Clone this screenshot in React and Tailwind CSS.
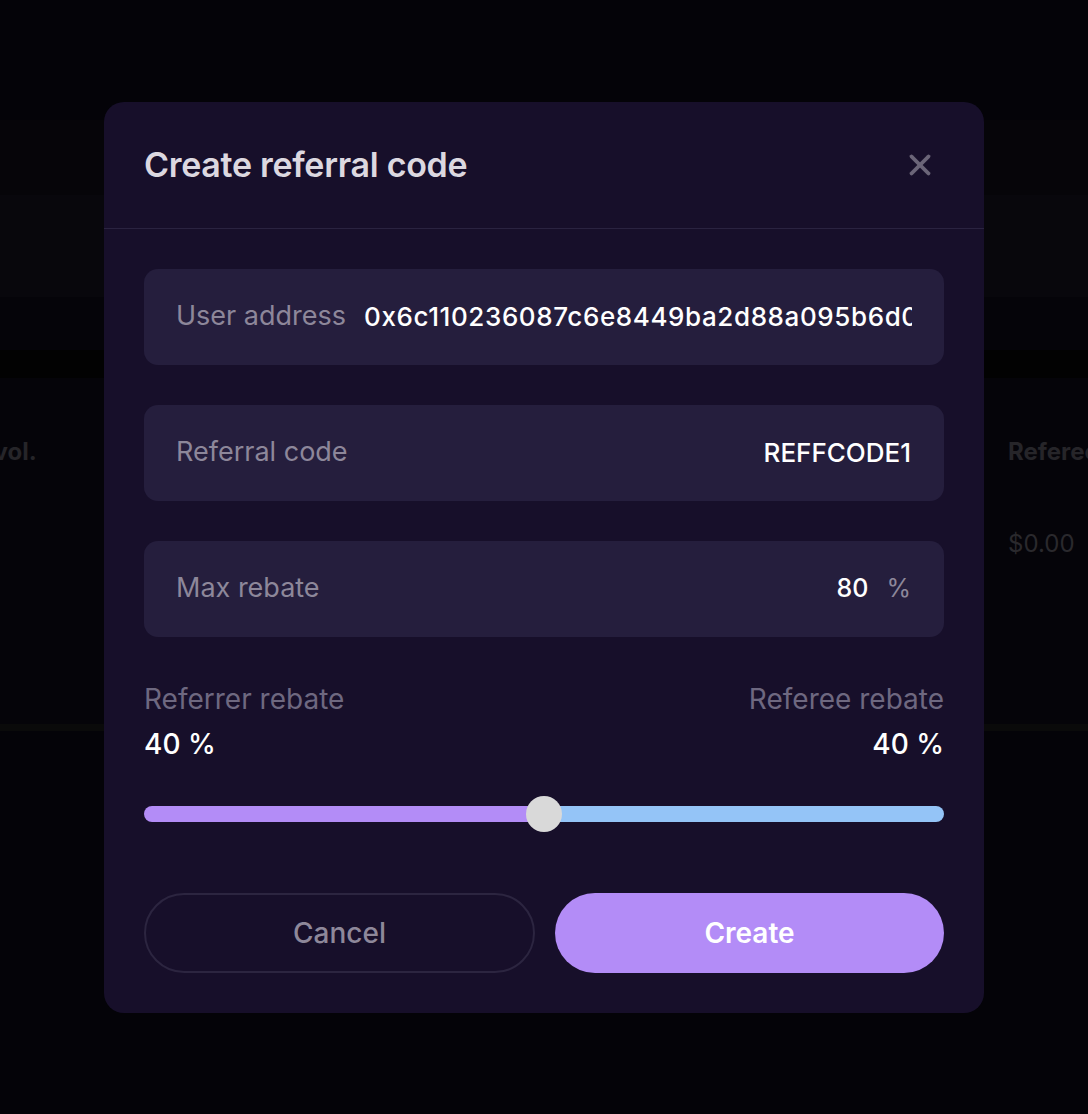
import React, { useState } from "react";
import { X } from "lucide-react";

const Field = ({ label, children }) => (
    <div className="flex items-center h-24 rounded-[14px] bg-[#251e3d] px-8">
        <span className="shrink-0 text-[27px] text-[#8d879a]">{label}</span>
        {children}
    </div>
);

const App = () => {
    const [split, setSplit] = useState(50);
    const [maxRebate] = useState(80);
    const referrer = Math.round((maxRebate * split) / 100);
    const referee = maxRebate - referrer;

    return (
        <div className="relative min-h-[1114px] overflow-hidden bg-[#040308] font-['Inter',sans-serif]">
            {/* page behind the modal, dimmed */}
            <div className="h-[120px]" />
            <div className="h-[75px] bg-[#060509]" />
            <div className="h-[102px] bg-[#08070c]" />
            <div className="h-[53px] bg-[#050409]" />
            <div className="h-[28px] bg-[#020202]" />
            <div className="h-[346px] bg-[#050409]">
                <div className="flex pt-[58px] text-2xl font-bold text-[#262529]">
                    <span className="-ml-[102px] w-[1110px] shrink-0">Trading vol.</span>
                    <span className="shrink-0 whitespace-nowrap">Referee rebates</span>
                </div>
                <div className="flex pt-[60px] text-2xl text-[#2a292d]">
                    <span className="ml-[1008px] shrink-0">$0.00</span>
                </div>
            </div>
            <div className="h-[7px] bg-[#0a0a0a]" />

            {/* modal */}
            <div className="absolute inset-0 flex items-center justify-center">
                <div className="w-[880px] rounded-[20px] bg-[#170f2a]">
                    <div className="flex h-[127px] items-center justify-between border-b border-[#2a2340] px-10">
                        <h2 className="text-[34px] font-semibold tracking-[-0.3px] text-[#dcd8e0]">Create referral code</h2>
                        <button className="mr-[7px] text-[#6b6578]">
                            <X size={34} strokeWidth={2.7} />
                        </button>
                    </div>

                    <div className="px-10 pt-10 pb-10">
                        <div className="flex flex-col gap-10">
                            <Field label="User address">
                                <span className="ml-[18px] overflow-hidden whitespace-nowrap text-[26px] font-medium tracking-[0.6px] text-white">
                                    0x6c110236087c6e8449ba2d88a095b6d0a1f3c2e9
                                </span>
                            </Field>
                            <Field label="Referral code">
                                <span className="ml-auto mr-px text-[26px] font-medium text-white">REFFCODE1</span>
                            </Field>
                            <Field label="Max rebate">
                                <span className="ml-auto text-[25px] font-medium text-white">{maxRebate}</span>
                                <span className="ml-[18px] mr-px text-[25px] text-[#8d879a]">%</span>
                            </Field>
                        </div>

                        <div className="mt-[46px] flex justify-between">
                            <div>
                                <div className="text-[28px] leading-8 text-[#6e6880]">Referrer rebate</div>
                                <div className="mt-[11px] text-[28px] font-medium leading-9 text-white">{referrer} %</div>
                            </div>
                            <div className="text-right">
                                <div className="text-[28px] leading-8 text-[#6e6880]">Referee rebate</div>
                                <div className="mt-[11px] text-[28px] font-medium leading-9 text-white">{referee} %</div>
                            </div>
                        </div>

                        <div className="relative mt-[34px] flex h-9 items-center">
                            <div className="flex h-4 w-full overflow-hidden rounded-full">
                                <div className="h-full bg-[#b38cf7]" style={{ width: `${split}%` }} />
                                <div className="h-full flex-1 bg-[#94c4f7]" />
                            </div>
                            <div
                                className="absolute top-0 h-9 w-9 -translate-x-1/2 rounded-full bg-[#d9d9d9]"
                                style={{ left: `${split}%` }}
                            />
                            <input
                                type="range"
                                min={0}
                                max={100}
                                value={split}
                                onChange={(e) => setSplit(Number(e.target.value))}
                                className="absolute inset-0 w-full cursor-pointer opacity-0"
                            />
                        </div>

                        <div className="mt-[61px] flex gap-5">
                            <button className="h-20 w-[391px] rounded-full border-2 border-[#2c2540] text-[28px] font-medium text-[#8e889a]">
                                Cancel
                            </button>
                            <button className="h-20 flex-1 rounded-full bg-[#b38cf7] text-[28px] font-semibold text-white">
                                Create
                            </button>
                        </div>
                    </div>
                </div>
            </div>
        </div>
    );
};

export default App;
